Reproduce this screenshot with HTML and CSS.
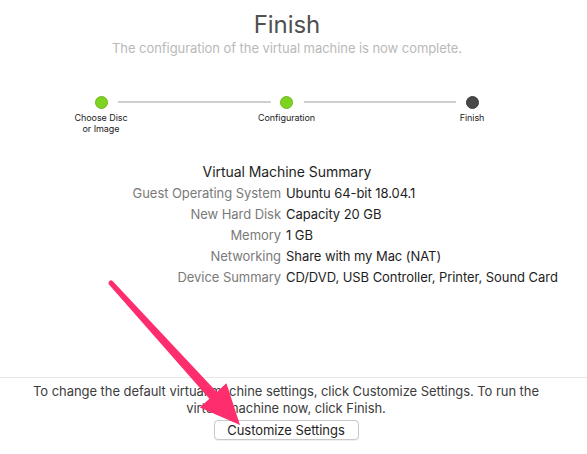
FILE: index.html
```html
<!DOCTYPE html>
<html>
<head>
<meta charset="utf-8">
<link rel="stylesheet" href="styles.css">
</head>
<body>
<div class="page">
  <header class="head">
    <h1 class="title">Finish</h1>
    <p class="subtitle">The configuration of the virtual machine is now complete.</p>
  </header>

  <div class="steps">
    <div class="step">
      <span class="dot dot-done"></span>
      <span class="step-label">Choose Disc<br>or Image</span>
    </div>
    <div class="connector"></div>
    <div class="step">
      <span class="dot dot-done"></span>
      <span class="step-label">Configuration</span>
    </div>
    <div class="connector"></div>
    <div class="step">
      <span class="dot dot-current"></span>
      <span class="step-label">Finish</span>
    </div>
  </div>

  <section class="summary">
    <h2 class="summary-title">Virtual Machine Summary</h2>
    <dl class="summary-grid">
      <dt>Guest Operating System</dt><dd>Ubuntu 64-bit 18.04.1</dd>
      <dt>New Hard Disk</dt><dd>Capacity 20 GB</dd>
      <dt>Memory</dt><dd>1 GB</dd>
      <dt>Networking</dt><dd>Share with my Mac (NAT)</dd>
      <dt>Device Summary</dt><dd>CD/DVD, USB Controller, Printer, Sound Card</dd>
    </dl>
  </section>

  <footer class="foot">
    <p class="foot-text">To change the default virtual machine settings, click Customize Settings. To run the<br>virtual machine now, click Finish.</p>
    <button class="btn">Customize Settings</button>
  </footer>

  <svg class="arrow" width="587" height="454" viewBox="0 0 587 454">
    <path fill="#fe2d6d" d="M112.85 281.3 L216.8 392 L226.4 383.3 L240 425 L199.8 407.5 L209.4 398.8 L109.15 284.7 A2.5 2.5 0 0 1 112.85 281.3 Z"/>
  </svg>
</div>
</body>
</html>
```
FILE: styles.css
```css
* { box-sizing: border-box; }
html, body { margin: 0; padding: 0; background: #fff; }
body {
  font-family: Inter, Roboto, "Liberation Sans", Arial, sans-serif;
  color: #222;
  letter-spacing: -0.06px;
}
.page {
  position: relative;
  width: 587px;
  height: 454px;
  padding-right: 13px;
  overflow: hidden;
}
.head { text-align: center; padding-top: 11px; }
.title {
  margin: 0;
  font-size: 24px;
  line-height: 28px;
  font-weight: 400;
  color: #505050;
}
.subtitle {
  margin: 1px 0 0;
  font-size: 13px;
  line-height: 16px;
  color: #b9b9b9;
}
.steps {
  display: flex;
  align-items: flex-start;
  margin-top: 40px;
  padding-left: 71px;
  width: 502px;
}
.step {
  width: 60px;
  flex: none;
  display: flex;
  flex-direction: column;
  align-items: center;
}
.dot {
  width: 13px;
  height: 13px;
  border-radius: 50%;
}
.dot-done { background: #7ed321; border: 1px solid #6cb81a; }
.dot-current { background: #484848; border: 1px solid #3a3a3a; }
.connector {
  flex: 1;
  height: 2px;
  margin: 5px -14px 0 -13px;
  background: #cfcfcf;
}
.step-label {
  margin-top: 3px;
  font-size: 9px;
  line-height: 11px;
  text-align: center;
  color: #222;
  white-space: nowrap;
}
.summary { margin-top: 27px; }
.summary-title {
  margin: 0;
  text-align: center;
  font-size: 14px;
  line-height: 21px;
  font-weight: 400;
  color: #1e1e1e;
}
.summary-grid {
  margin: 1px 0 0;
  display: grid;
  grid-template-columns: 281px 1fr;
  column-gap: 5px;
  font-size: 13px;
  line-height: 21px;
}
.summary-grid dt { text-align: right; color: #7a7a7a; }
.summary-grid dd { margin: 0; color: #1e1e1e; white-space: nowrap; }
.foot {
  position: absolute;
  left: 0;
  right: 0;
  top: 377px;
  padding-right: 15px;
  border-top: 1px solid #e8e8e8;
  text-align: center;
}
.foot-text {
  margin: 5px 0 0;
  font-size: 13px;
  line-height: 17px;
  color: #3c3c3c;
}
.btn {
  margin-top: 3px;
  width: 145px;
  height: 20px;
  padding: 0;
  font-family: inherit;
  font-size: 13px;
  letter-spacing: inherit;
  color: #1e1e1e;
  background: #fff;
  border: 1px solid #c9c9c9;
  border-radius: 4px;
  box-shadow: 0 1px 0 rgba(0,0,0,0.06);
}
.arrow {
  position: absolute;
  left: 0;
  top: 0;
  pointer-events: none;
}
```
